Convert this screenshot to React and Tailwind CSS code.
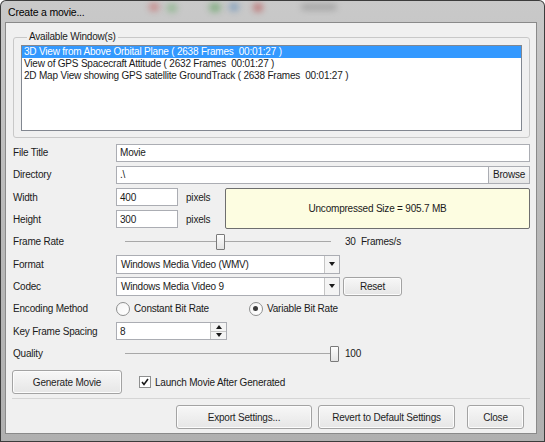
import React from 'react';

const Btn = ({ className = '', children }) => (
  <button className={`flex items-center justify-center rounded-[3px] border border-[#a3a3a3] bg-linear-to-b from-[#f7f7f7] to-[#e6e6e6] text-[10px] text-[#1e1e1e] shadow-[inset_0_0_0_1px_#fcfcfc] ${className}`}>
    {children}
  </button>
);

const TextBox = ({ value, className = '' }) => (
  <div className={`flex h-[18px] items-center border border-[#abadb3] bg-white px-[3px] ${className}`}>{value}</div>
);

const Arrow = ({ up }) => (
  <svg width="6" height="4" viewBox="0 0 6 4">
    <path d={up ? 'M0 4 L3 0 L6 4 Z' : 'M0 0 L6 0 L3 4 Z'} fill="#1a1a1a" />
  </svg>
);

const Combo = ({ value }) => (
  <div className="flex h-[19px] w-[224px] items-stretch border border-[#abadb3] bg-white">
    <div className="flex flex-1 items-center px-[4px]">{value}</div>
    <div className="flex w-[15px] items-center justify-center border-l border-[#c5c5c5] bg-[#f4f4f4]">
      <Arrow />
    </div>
  </div>
);

const Slider = ({ pos }) => (
  <div className="relative flex h-[18px] w-[224px] items-center px-[9px]">
    <div className="h-[2px] flex-1 border-t border-[#a8a8a8] border-b-white" />
    <div
      className="absolute top-[1px] h-[16px] w-[9px] rounded-[1px] border border-[#7a7a7a] bg-linear-to-b from-[#fdfdfd] to-[#e4e4e4]"
      style={{ left: pos }}
    />
  </div>
);

const Radio = ({ checked }) => (
  <div className="flex h-[14px] w-[14px] items-center justify-center rounded-full border border-[#8e8f8f] bg-linear-to-br from-[#f4f4f4] to-white">
    {checked && <div className="h-[5px] w-[5px] rounded-full bg-[#3a3a3a]" />}
  </div>
);

const Row = ({ label, children }) => (
  <div className="flex h-[19px] items-center">
    <div className="w-[103px] shrink-0">{label}</div>
    {children}
  </div>
);

const windows = [
  '3D View from Above Orbital Plane ( 2638 Frames  00:01:27 )',
  'View of GPS Spacecraft Attitude ( 2632 Frames  00:01:27 )',
  '2D Map View showing GPS satellite GroundTrack ( 2638 Frames  00:01:27 )',
];

export default function App() {
  return (
    <div className="h-[442px] w-[545px] rounded-t-[6px] bg-[#3c3c3c] p-px font-['Liberation_Sans',Arial,sans-serif] text-[10px] tracking-[-0.2px] text-[#1a1a1a]">
      <div className="relative flex h-full flex-col overflow-hidden rounded-t-[5px] bg-linear-to-b from-[#c9c9c9] via-[#b9b9b9] to-[#b0b0b0] pb-[7px] pl-[4px] pr-[7px]">
        {/* blurred desktop behind the glass title bar */}
        <div className="absolute left-[148px] top-[2px] h-[8px] w-[10px] rounded-full bg-[#c86060] opacity-60 blur-[3px]" />
        <div className="absolute left-[166px] top-[3px] h-[8px] w-[10px] rounded-full bg-[#6fae6f] opacity-60 blur-[3px]" />
        <div className="absolute left-[208px] top-[2px] h-[9px] w-[12px] rounded-full bg-[#5aa05a] opacity-60 blur-[3px]" />
        <div className="absolute left-[228px] top-[2px] h-[8px] w-[10px] rounded-full bg-[#5a8ab8] opacity-60 blur-[3px]" />
        <div className="absolute left-[252px] top-[2px] h-[9px] w-[10px] rounded-full bg-[#b84a4a] opacity-60 blur-[3px]" />
        <div className="absolute left-[300px] top-[3px] h-[6px] w-[36px] rounded-full bg-[#6a6a6a] opacity-40 blur-[3px]" />

        <div className="relative flex h-[21px] items-center pl-[3px] pt-[2px] text-[10.5px] text-black">Create a movie...</div>

        <div className="flex flex-1 flex-col border border-[#8a8a8a] bg-[#f0f0f0] pl-[7px] pr-[6px]">
          <fieldset className="mt-[8px] rounded-[3px] border border-[#c8c8c8] px-[7px] pb-[6px]">
            <legend className="ml-[6px] px-[2px] leading-[12px]">Available Window(s)</legend>
            <div className="mt-[2px] h-[86px] border border-[#828790] bg-white">
              {windows.map((w, i) => (
                <div key={w} className={`h-[12px] whitespace-pre pl-[2px] leading-[12px] ${i === 0 ? 'bg-[#3399ff] text-white' : ''}`}>
                  {w}
                </div>
              ))}
            </div>
          </fieldset>

          <div className="mt-[5px] flex flex-col gap-[3.4px]">
            <Row label="File Title">
              <TextBox value="Movie" className="flex-1" />
            </Row>
            <Row label="Directory">
              <TextBox value=".\" className="flex-1" />
              <div className="flex h-[18px] w-[41px] items-center justify-center border border-l-0 border-[#abadb3] bg-linear-to-b from-[#f7f7f7] to-[#e6e6e6]">Browse</div>
            </Row>
            <div className="flex h-[41px] items-stretch">
              <div className="flex w-[212px] flex-col justify-between">
                <Row label="Width">
                  <TextBox value="400" className="w-[62px]" />
                  <span className="ml-[8px]">pixels</span>
                </Row>
                <Row label="Height">
                  <TextBox value="300" className="w-[62px]" />
                  <span className="ml-[8px]">pixels</span>
                </Row>
              </div>
              <div className="flex flex-1 items-center justify-center rounded-[2px] border border-[#6e6e6e] bg-[#fdfde1]">
                Uncompressed Size = 905.7 MB
              </div>
            </div>
            <Row label="Frame Rate">
              <Slider pos={100} />
              <span className="ml-[5px] whitespace-pre">30  Frames/s</span>
            </Row>
            <Row label="Format">
              <Combo value="Windows Media Video (WMV)" />
            </Row>
            <Row label="Codec">
              <Combo value="Windows Media Video 9" />
              <Btn className="ml-[3px] h-[19px] w-[59px]">Reset</Btn>
            </Row>
            <Row label="Encoding Method">
              <Radio />
              <span className="ml-[4px]">Constant Bit Rate</span>
              <div className="ml-[40px]">
                <Radio checked />
              </div>
              <span className="ml-[4px]">Variable Bit Rate</span>
            </Row>
            <Row label="Key Frame Spacing">
              <div className="flex h-[18px] w-[111px] border border-[#abadb3] bg-white">
                <div className="flex flex-1 items-center px-[3px]">8</div>
                <div className="flex w-[16px] flex-col border-l border-[#c5c5c5]">
                  <div className="flex flex-1 items-center justify-center border-b border-[#c5c5c5] bg-[#f4f4f4]">
                    <Arrow up />
                  </div>
                  <div className="flex flex-1 items-center justify-center bg-[#f4f4f4]">
                    <Arrow />
                  </div>
                </div>
              </div>
            </Row>
            <Row label="Quality">
              <Slider pos={214} />
              <span className="ml-[5px]">100</span>
            </Row>
          </div>

          <div className="mt-[7px] flex items-center">
            <Btn className="-ml-[1px] h-[24px] w-[110px]">Generate Movie</Btn>
            <div className="ml-[17px] flex h-[12px] w-[12px] items-center justify-center border border-[#8e8f8f] bg-white">
              <svg width="8" height="8" viewBox="0 0 8 8">
                <path d="M1 4 L3 6.5 L7 1" fill="none" stroke="#1a1a1a" strokeWidth="1.6" />
              </svg>
            </div>
            <span className="ml-[4px]">Launch Movie After Generated</span>
          </div>

          <div className="-ml-[1px] mt-[4px] border-t border-[#d5d5d5] border-b-white" />

          <div className="mr-[6px] mt-[6px] flex justify-end">
            <Btn className="h-[24px] w-[136px]">Export Settings...</Btn>
            <Btn className="ml-[6px] h-[24px] w-[137px]">Revert to Default Settings</Btn>
            <Btn className="ml-[12px] h-[24px] w-[57px]">Close</Btn>
          </div>
        </div>
      </div>
    </div>
  );
}
